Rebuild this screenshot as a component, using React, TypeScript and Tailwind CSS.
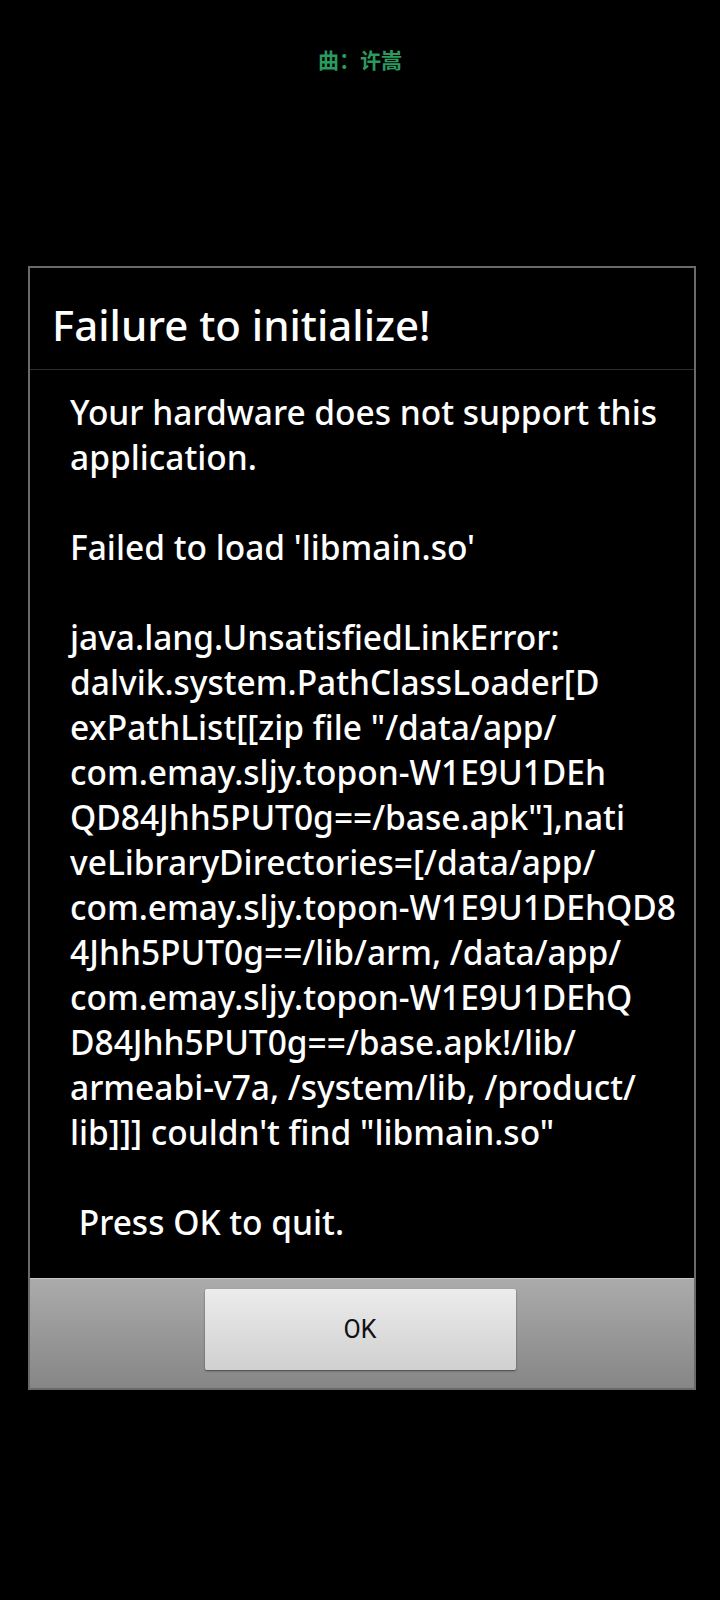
const lines = [
  "Your hardware does not support this",
  "application.",
  "",
  "Failed to load 'libmain.so'",
  "",
  "java.lang.UnsatisfiedLinkError:",
  "dalvik.system.PathClassLoader[D",
  'exPathList[[zip file "/data/app/',
  "com.emay.sljy.topon-W1E9U1DEh",
  'QD84Jhh5PUT0g==/base.apk"],nati',
  "veLibraryDirectories=[/data/app/",
  "com.emay.sljy.topon-W1E9U1DEhQD8",
  "4Jhh5PUT0g==/lib/arm, /data/app/",
  "com.emay.sljy.topon-W1E9U1DEhQ",
  "D84Jhh5PUT0g==/base.apk!/lib/",
  "armeabi-v7a, /system/lib, /product/",
  'lib]]] couldn\'t find "libmain.so"',
  "",
  " Press OK to quit.",
];

export default function App() {
  return (
    <div className="w-[720px] h-[1600px] bg-black flex flex-col overflow-hidden">
      <div className="h-[266px] w-full flex justify-center pt-[45px]">
        <span className="text-[21px] leading-[28px] font-bold text-[#2a9a5e] [font-family:'Noto_Sans_CJK_SC',sans-serif]">
          曲：许嵩
        </span>
      </div>

      <div className="w-[668px] ml-[28px] border-2 border-[#6a6a6a] bg-black flex flex-col [font-family:'Noto_Sans',sans-serif]">
        <div className="h-[102px] flex items-center pl-[22px] pt-[12px] border-b border-[#2e2e2e]">
          <h1 className="text-[42px] leading-[50px] font-medium text-white">Failure to initialize!</h1>
        </div>

        <div className="pl-[40px] pt-[20px] pb-[33px] text-white text-[33.5px] leading-[45px] font-medium">
          {lines.map((l, i) => (
            <div key={i} className="h-[45px] whitespace-pre">
              {l}
            </div>
          ))}
        </div>

        <div className="h-[110px] bg-gradient-to-b from-[#ababab] to-[#868686] border-t border-[#c4c4c4] pt-[10px] flex justify-center">
          <button className="w-[311px] h-[81px] ml-[-4px] bg-gradient-to-b from-[#ececec] to-[#d0d0d0] rounded-[2px] shadow-[0_1px_2px_rgba(0,0,0,0.5)] text-[#111] text-[25px] [font-family:'Roboto',sans-serif]">
            OK
          </button>
        </div>
      </div>
    </div>
  );
}
